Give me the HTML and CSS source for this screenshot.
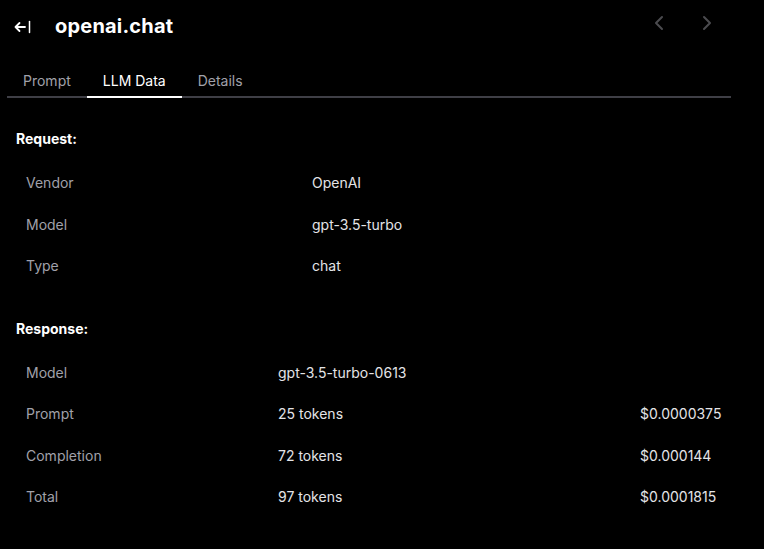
FILE: index.html
```html
<!DOCTYPE html>
<html>
<head>
<meta charset="utf-8">
<link rel="stylesheet" href="styles.css">
</head>
<body>
<div class="page">
  <header class="header">
    <svg class="back" width="18" height="14" viewBox="0 0 18 14"><path d="M1.5 7H11M5.5 3L1.5 7L5.5 11" fill="none" stroke="#fff" stroke-width="1.8" stroke-linecap="round" stroke-linejoin="round"/><path d="M15.5 1.5V12.5" stroke="#fff" stroke-width="1.5" stroke-linecap="round"/></svg>
    <h1 class="title">openai.chat</h1>
    <div class="navs">
      <svg class="nav" width="12" height="16" viewBox="0 0 12 16"><path d="M9 2L3 8L9 14" fill="none" stroke="#4b4b4f" stroke-width="2" stroke-linecap="round" stroke-linejoin="round"/></svg>
      <svg class="nav" width="12" height="16" viewBox="0 0 12 16"><path d="M3 2L9 8L3 14" fill="none" stroke="#4b4b4f" stroke-width="2" stroke-linecap="round" stroke-linejoin="round"/></svg>
    </div>
  </header>
  <nav class="tabs">
    <div class="tab">Prompt</div>
    <div class="tab active">LLM Data</div>
    <div class="tab">Details</div>
  </nav>
  <section class="content">
    <h2 class="heading first">Request:</h2>
    <div class="grid req">
      <div class="cell label">Vendor</div><div class="cell value">OpenAI</div>
      <div class="cell label">Model</div><div class="cell value">gpt-3.5-turbo</div>
      <div class="cell label">Type</div><div class="cell value">chat</div>
    </div>
    <h2 class="heading">Response:</h2>
    <div class="grid res">
      <div class="cell label">Model</div><div class="cell value">gpt-3.5-turbo-0613</div><div class="cell value"></div>
      <div class="cell label">Prompt</div><div class="cell value">25 tokens</div><div class="cell value">$0.0000375</div>
      <div class="cell label">Completion</div><div class="cell value">72 tokens</div><div class="cell value">$0.000144</div>
      <div class="cell label">Total</div><div class="cell value">97 tokens</div><div class="cell value">$0.0001815</div>
    </div>
  </section>
</div>
</body>
</html>
```
FILE: styles.css
```css
html, body {
  margin: 0;
  background: #000;
}
body {
  font-family: "Inter", "Liberation Sans", sans-serif;
  font-size: 14px;
  color: #e4e4e7;
  width: 764px;
  height: 549px;
  overflow: hidden;
}
.header {
  height: 52px;
  display: flex;
  align-items: center;
  padding-left: 14px;
}
.back {
  display: block;
  margin-top: 1px;
}
.title {
  margin: 0 0 0 23px;
  font-size: 20px;
  font-weight: 700;
  color: #fff;
  letter-spacing: 0.2px;
}
.navs {
  margin-left: auto;
  margin-right: 51px;
  display: flex;
  gap: 36px;
  align-self: flex-start;
  margin-top: 15px;
}
.nav { display: block; }
.tabs {
  margin: 10px 0 0 7px;
  width: 724px;
  display: flex;
  border-bottom: 2px solid #3f3f46;
}
.tab {
  padding: 9px 16px 5px;
  line-height: 20px;
  color: #a1a1aa;
  border-bottom: 2px solid transparent;
  margin-bottom: -2px;
}
.tab.active {
  color: #fff;
  border-bottom-color: #fff;
}
.content {
  padding-left: 16px;
  width: 715px;
}
.heading {
  margin: 32px 0 13px;
  font-size: 14px;
  font-weight: 700;
  line-height: 20px;
  color: #fff;
}
.heading.first { margin-top: 31px; }
.grid {
  display: grid;
  grid-auto-rows: 41.5px;
}
.req { grid-template-columns: 286px 1fr; }
.res { grid-template-columns: 252px 362px 1fr; }
.cell {
  display: flex;
  align-items: center;
  padding-left: 10px;
}
.label { color: #a1a1aa; }
.value { color: #e4e4e7; }
```
